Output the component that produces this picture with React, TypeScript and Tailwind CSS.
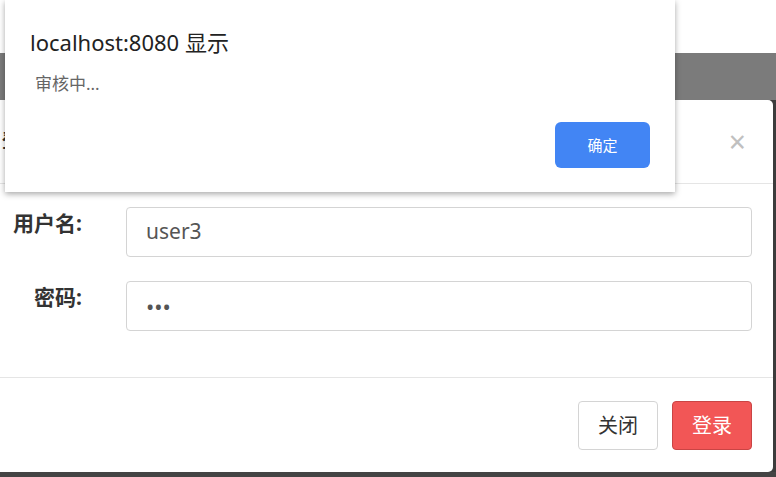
export default function App() {
  const cjk = { fontFamily: '"Noto Sans", "Noto Sans CJK SC", sans-serif' };

  return (
    <div
      className="relative w-[776px] h-[477px] overflow-hidden bg-white flex flex-col"
      style={cjk}
    >
      {/* page behind the modal */}
      <div className="h-[53px] bg-white shrink-0" />
      <div className="h-[47px] bg-[#7b7b7b] shrink-0" />
      <div className="flex flex-1 bg-[#3c3c3c]">
        <div className="w-[773px] bg-white rounded-tr-[5px] rounded-br-[5px] flex flex-col">
          {/* modal header */}
          <div className="h-[84px] flex items-center justify-between border-b border-[#e5e5e5] pr-[27px]">
            <span className="ml-[2px] text-[19px] font-bold text-[#333]">登录</span>
            <span className="text-[30px] leading-none text-[#c0c0c0]">×</span>
          </div>
          {/* modal body */}
          <div className="flex flex-col gap-[24px] pt-[23px] pb-[46px] pr-[21px] border-b border-[#e5e5e5]">
            <div className="flex items-start">
              <label className="w-[82px] text-right pt-[1px] text-[21px] font-bold text-[#333]">用户名:</label>
              <div className="ml-[44px] flex-1 h-[50px] border border-[#d4d4d4] rounded-[4px] flex items-center pl-[19px] text-[21px] text-[#555]">
                user3
              </div>
            </div>
            <div className="flex items-start">
              <label className="w-[82px] text-right pt-[1px] text-[21px] font-bold text-[#333]">密码:</label>
              <div className="ml-[44px] flex-1 h-[50px] border border-[#d4d4d4] rounded-[4px] flex items-center pl-[19px] text-[22px] text-[#555]">
                •••
              </div>
            </div>
          </div>
          {/* modal footer */}
          <div className="flex-1 flex items-start justify-end gap-[14px] pt-[23px] pr-[21px]">
            <button className="w-[80px] h-[49px] border border-[#d4d4d4] rounded-[4px] bg-white text-[20px] text-[#333]">
              关闭
            </button>
            <button className="w-[80px] h-[49px] border border-[#c94444] rounded-[4px] bg-[#f25656] text-[20px] text-white">
              登录
            </button>
          </div>
        </div>
      </div>
      <div className="h-[5px] bg-[#444] shrink-0" />

      {/* browser alert */}
      <div className="absolute left-[5px] top-0 w-[670px] h-[192px] bg-white shadow-[0_2px_6px_rgba(0,0,0,0.35)] flex flex-col">
        <div className="pl-[25px] pt-[27px] text-[22px] leading-[30px] text-[#222]">localhost:8080 显示</div>
        <div className="pl-[30px] pt-[15px] text-[17px] leading-[24px] text-[#666]">审核中...</div>
        <div className="flex justify-end pr-[25px] pt-[26px]">
          <button className="w-[95px] h-[46px] rounded-[6px] bg-[#4285f4] text-[15px] text-white">确定</button>
        </div>
      </div>
    </div>
  );
}
